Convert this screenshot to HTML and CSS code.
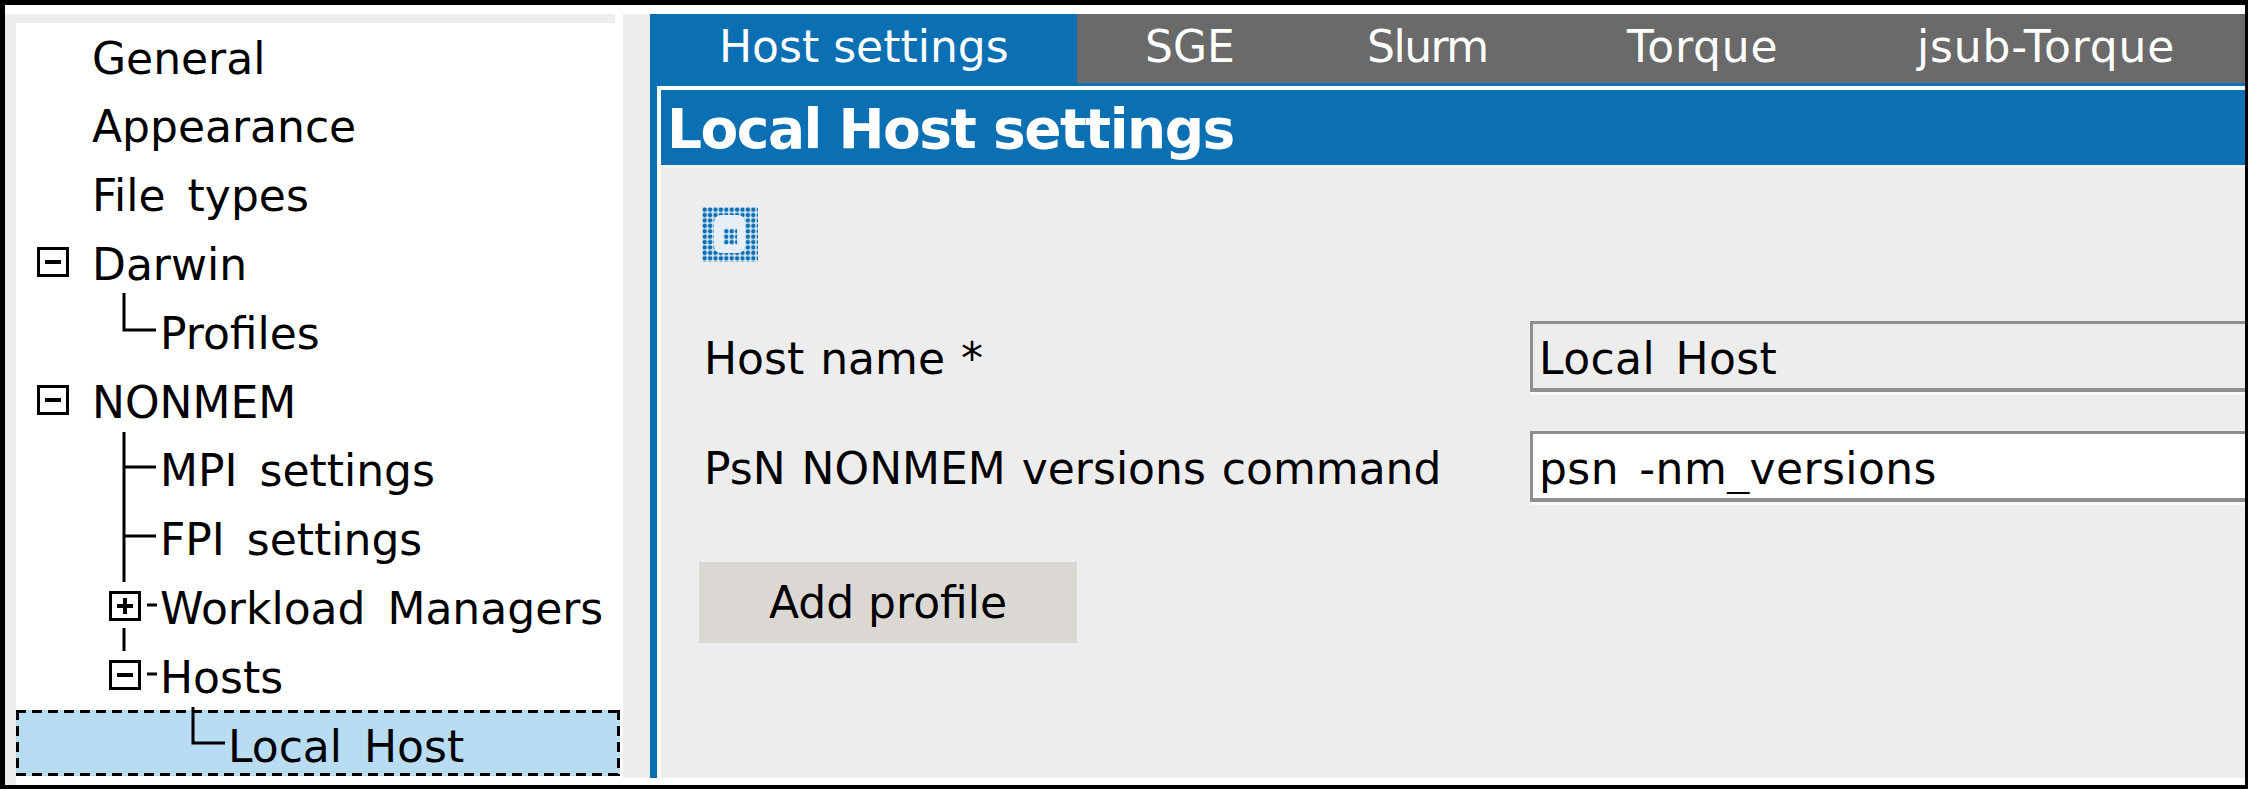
FILE: index.html
```html
<!DOCTYPE html>
<html lang="en">
<head>
<meta charset="utf-8">
<title>Local Host settings</title>
<link rel="stylesheet" href="styles.css">
</head>
<body>
<div class="frame">
  <aside class="side">
    <nav class="tree">
      <svg class="lines" width="607" height="771" viewBox="0 0 607 771">
        <path d="M108 279V316H140M108 418V568M108 453H140M108 522H140M108 614V637M177 693V729H209M131 591H141M131 660H141" fill="none" stroke="#000" stroke-width="3"/>
      </svg>
      <div class="row l0">General</div>
      <div class="row l0">Appearance</div>
      <div class="row l0">File types</div>
      <div class="row l0"><span class="box minus top"></span>Darwin</div>
      <div class="row l1">Profiles</div>
      <div class="row l0"><span class="box minus top"></span>NONMEM</div>
      <div class="row l1">MPI settings</div>
      <div class="row l1">FPI settings</div>
      <div class="row l1"><span class="box plus sub"></span>Workload Managers</div>
      <div class="row l1"><span class="box minus sub"></span>Hosts</div>
      <div class="row l2 selected">Local Host</div>
    </nav>
  </aside>
  <div class="gutter"></div>
  <main class="main">
    <div class="tabs">
      <div class="tab active">Host settings</div>
      <div class="tab t-sge">SGE</div>
      <div class="tab t-slurm">Slurm</div>
      <div class="tab t-torque">Torque</div>
      <div class="tab t-jsub">jsub-Torque</div>
    </div>
    <section class="panel">
      <h1 class="title">Local Host settings</h1>
      <div class="body">
        <svg class="icon" width="56" height="55" viewBox="0 0 56 55">
          <defs>
            <pattern id="dots" width="5.4" height="5.4" patternUnits="userSpaceOnUse">
              <rect width="5.4" height="5.4" fill="#d3e4f1"/>
              <circle cx="2.7" cy="2.7" r="2.2" fill="#0a6fb3"/>
            </pattern>
          </defs>
          <rect width="56" height="55" fill="url(#dots)"/>
          <rect x="12" y="8" width="31" height="38" rx="7" fill="#e6eff6"/>
          <rect x="21.6" y="21.6" width="13.5" height="16.2" fill="url(#dots)"/>
        </svg>
        <div class="field">
          <label class="label">Host name *</label>
          <input class="input off" type="text" value="Local Host">
        </div>
        <div class="field">
          <label class="label">PsN NONMEM versions command</label>
          <input class="input" type="text" value="psn -nm_versions">
        </div>
        <button class="add" type="button">Add profile</button>
      </div>
    </section>
  </main>
</div>
</body>
</html>
```

FILE: styles.css
```css
* { box-sizing: border-box; }
html, body { margin: 0; height: 100%; background: #000; }
body { padding: 5px 3px 4px 5px; font-family: "DejaVu Sans", sans-serif; color: #000; }
.frame { display: flex; align-items: flex-start; height: 780px; padding-top: 9px; background: #fff; overflow: hidden; }

.side { width: 618px; height: 771px; flex: none; }
.tree { position: relative; height: 100%; border-left: 11px solid #ededed; padding-top: 9.6px; background: #fff; display: flex; flex-direction: column; }
.tree::before { content: ""; position: absolute; top: 0; left: 0; width: 599px; height: 9px; background: #ededed; }
.lines { position: absolute; left: 0; top: 0; z-index: 1; }
.row { position: relative; height: 68.8px; flex: none; font-size: 44px; line-height: 70.4px; word-spacing: 8px; white-space: nowrap; }
.l0 { padding-left: 76px; }
.l1 { padding-left: 144px; }
.l2 { padding-left: 212px; }
.selected {
  height: 66px;
  margin: -2px 3px 0 0;
  line-height: 74.4px;
  background:
    repeating-linear-gradient(90deg, #000 0 10px, transparent 10px 16px) top / 100% 3px no-repeat,
    repeating-linear-gradient(90deg, #000 0 10px, transparent 10px 16px) bottom / 100% 3px no-repeat,
    repeating-linear-gradient(180deg, #000 0 10px, transparent 10px 16px) left / 3px 100% no-repeat,
    repeating-linear-gradient(180deg, #000 0 10px, transparent 10px 16px) right / 3px 100% no-repeat,
    #b8dcf2;
}
.box { position: absolute; top: 17px; width: 32px; height: 30px; border: 3px solid #000; background: #fff; }
.top { left: 21px; }
.sub { left: 93px; }
.minus::before, .plus::before { content: ""; position: absolute; left: 5px; right: 5px; top: 10px; height: 4px; background: #000; }
.plus::after { content: ""; position: absolute; top: 4px; bottom: 4px; left: 11px; width: 4px; background: #000; }

.gutter { width: 27px; height: 764px; flex: none; background: #ededed; }

.main { flex: 1; min-width: 0; height: 764px; display: flex; flex-direction: column; overflow: hidden; background: #ededed; border-left: 7px solid #0a6fb3; }
.tabs { display: flex; height: 69px; flex: none; background: #6a6a6a; margin-left: -7px; }
.tab { flex: none; color: #fff; font-size: 44px; line-height: 66px; white-space: nowrap; padding-left: 68px; }
.tab.active { background: #0a6fb3; width: 427px; padding-left: 69px; }
.t-sge { width: 222px; }
.t-slurm { width: 260px; letter-spacing: -1.5px; }
.t-torque { width: 290px; letter-spacing: 0.8px; }
.t-jsub { letter-spacing: 0.8px; }
.panel { flex: 1; min-height: 0; display: flex; flex-direction: column; border-top: 3px solid #0a6fb3; }
.title { flex: none; margin: 0; height: 79px; border: solid #fff; border-width: 4px 0 0 4px; background: #0a6fb3; color: #fff; font-size: 55px; font-weight: 700; letter-spacing: -1.5px; line-height: 78px; padding-left: 6px; white-space: nowrap; }
.body { flex: 1; border-left: 4px solid #fff; border-top: 3px solid #fbf3ee; padding: 39px 0 0 41px; }
.icon { display: block; margin-bottom: 59px; }
.field { display: flex; align-items: center; height: 71px; margin-bottom: 39px; }
.label { width: 828px; flex: none; font-size: 44px; word-spacing: 2px; padding: 4px 0 0 2px; white-space: nowrap; }
.input { flex: 1; min-width: 0; height: 71px; margin-right: -6px; border: 3px solid #8f8f8f; border-bottom-width: 4px; box-shadow: 0 3px 0 #f8f8f8; background: #fff; font: 44px "DejaVu Sans", sans-serif; word-spacing: 6px; letter-spacing: 0.4px; color: #000; padding: 4px 3px 0 6px; border-radius: 0; outline: none; }
.off { background: #ededed; }
.add { display: block; width: 378px; height: 81px; margin: 60px 0 0 -3px; border: 0; background: #dbd7d2; font: 44px "DejaVu Sans", sans-serif; color: #000; padding: 0; }
```
